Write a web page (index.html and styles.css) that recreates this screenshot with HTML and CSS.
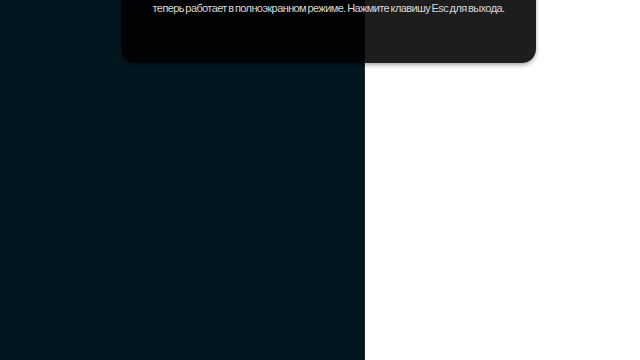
FILE: index.html
```html
<!DOCTYPE html>
<html lang="ru">
<head>
<meta charset="utf-8">
<link rel="stylesheet" href="styles.css">
</head>
<body>
<div class="page">
  <div class="left"></div>
  <div class="right"></div>
</div>
<div class="notice">
  <p class="notice-text">теперь работает в полноэкранном режиме. Нажмите клавишу Esc для выхода.</p>
</div>
</body>
</html>
```
FILE: styles.css
```css
html, body {
  margin: 0;
  padding: 0;
  width: 640px;
  height: 360px;
  overflow: hidden;
  background: #ffffff;
}
.page {
  display: flex;
  width: 640px;
  height: 360px;
}
.left {
  width: 365px;
  background: #021620;
  border-right: 1px solid #1a2a33;
  box-sizing: border-box;
}
.right {
  flex: 1;
  background: #ffffff;
}
.notice {
  position: absolute;
  left: 121px;
  top: -20px;
  width: 415px;
  height: 83px;
  box-sizing: border-box;
  background: rgba(0, 0, 0, 0.885);
  border-radius: 0 0 14px 14px;
  box-shadow: 0 2px 4px rgba(0, 0, 0, 0.35);
  display: flex;
  justify-content: center;
}
.notice-text {
  margin: 21px 0 0 0;
  font-family: "Liberation Sans Narrow", "Liberation Sans", Arial, sans-serif;
  font-size: 11px;
  line-height: 14px;
  letter-spacing: -0.6px;
  word-spacing: -1px;
  color: #d8d8d8;
  white-space: nowrap;
}
```
